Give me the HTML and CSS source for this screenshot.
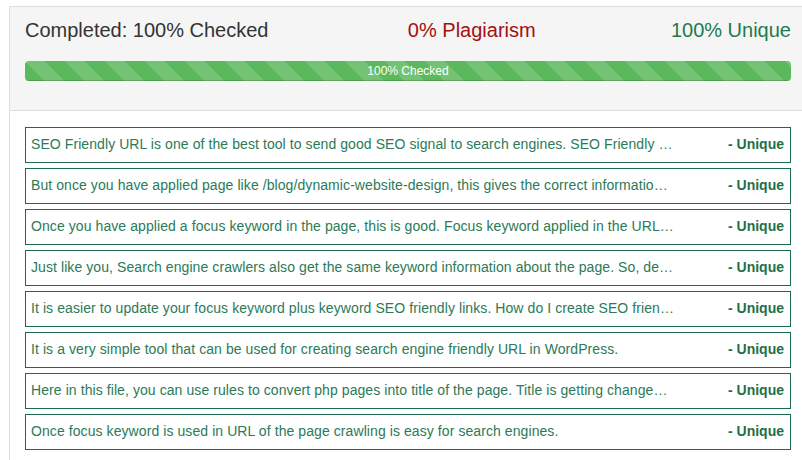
FILE: index.html
```html
<!DOCTYPE html>
<html>
<head>
<meta charset="utf-8">
<link rel="stylesheet" href="styles.css">
</head>
<body>
<div class="panel">
  <div class="panel-heading">
    <div class="stats">
      <div class="stat done">Completed: 100% Checked</div>
      <div class="stat plag">0% Plagiarism</div>
      <div class="stat uniq">100% Unique</div>
    </div>
    <div class="progress">
      <div class="bar">100% Checked</div>
    </div>
  </div>
  <div class="panel-body">
    <div class="row"><span class="txt">SEO Friendly URL is one of the best tool to send good SEO signal to search engines. SEO Friendly …</span><span class="res">- Unique</span></div>
    <div class="row"><span class="txt">But once you have applied page like /blog/dynamic-website-design, this gives the correct informatio…</span><span class="res">- Unique</span></div>
    <div class="row"><span class="txt">Once you have applied a focus keyword in the page, this is good. Focus keyword applied in the URL…</span><span class="res">- Unique</span></div>
    <div class="row"><span class="txt">Just like you, Search engine crawlers also get the same keyword information about the page. So, de…</span><span class="res">- Unique</span></div>
    <div class="row"><span class="txt">It is easier to update your focus keyword plus keyword SEO friendly links. How do I create SEO frien…</span><span class="res">- Unique</span></div>
    <div class="row"><span class="txt">It is a very simple tool that can be used for creating search engine friendly URL in WordPress.</span><span class="res">- Unique</span></div>
    <div class="row"><span class="txt">Here in this file, you can use rules to convert php pages into title of the page. Title is getting change…</span><span class="res">- Unique</span></div>
    <div class="row"><span class="txt">Once focus keyword is used in URL of the page crawling is easy for search engines.</span><span class="res">- Unique</span></div>
  </div>
</div>
</body>
</html>
```
FILE: styles.css
```css
html, body {
  margin: 0;
  padding: 0;
  background: #fff;
  font-family: "Liberation Sans", Arial, sans-serif;
}
body {
  padding: 6px 0 0 9px;
  width: 812px;
  overflow: hidden;
}
.panel {
  border: 1px solid #dddddd;
  border-bottom: none;
  width: 796px;
}
.panel-heading {
  background: #f5f5f5;
  border-bottom: 1px solid #dddddd;
  padding: 11px 15px 29px 15px;
}
.stats {
  display: grid;
  grid-template-columns: 1fr 1fr 1fr;
  font-size: 20px;
  line-height: 24px;
}
.stat.done { color: #333333; }
.stat.plag { color: #a30f0f; text-align: right; }
.stat.uniq { color: #1f7a4c; text-align: right; }
.progress {
  margin-top: 19px;
  height: 20px;
  border-radius: 4px;
  overflow: hidden;
  background: #5cb85c;
}
.bar {
  height: 20px;
  line-height: 20px;
  text-align: center;
  color: #fff;
  font-size: 12px;
  background-color: #5cb85c;
  background-image: linear-gradient(45deg, rgba(255,255,255,.15) 25%, transparent 25%, transparent 50%, rgba(255,255,255,.15) 50%, rgba(255,255,255,.15) 75%, transparent 75%, transparent);
  background-size: 40px 40px;
  box-shadow: inset 0 -1px 0 rgba(0,0,0,.15);
}
.panel-body {
  padding: 16px 15px 10px 15px;
  display: flex;
  flex-direction: column;
  gap: 5px;
}
.row {
  border: 1px solid #1d6b4c;
  height: 34px;
  box-sizing: content-box;
  display: flex;
  align-items: center;
  justify-content: space-between;
  padding: 0 6px 2px 5px;
  height: 32px;
  font-size: 14px;
  letter-spacing: 0.08px;
  color: #2b7a58;
}
.txt {
  max-width: 680px;
  white-space: nowrap;
  overflow: hidden;
  text-overflow: ellipsis;
}
.res {
  font-weight: bold;
  letter-spacing: 0;
  color: #1f7047;
}
```
